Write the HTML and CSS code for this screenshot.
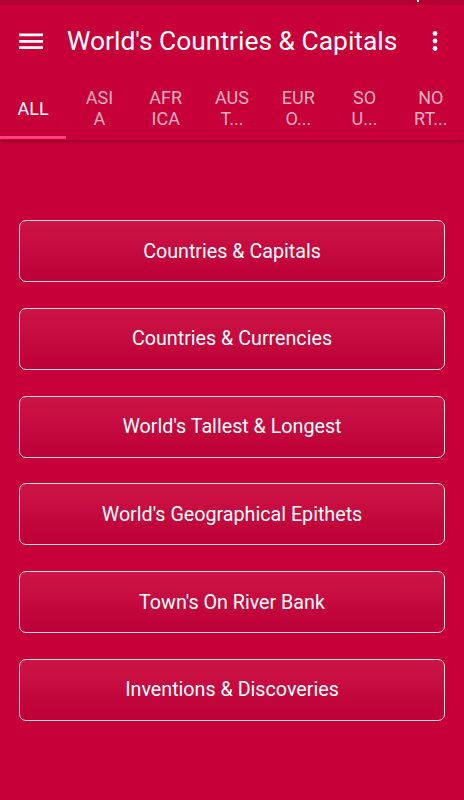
FILE: index.html
```html
<!DOCTYPE html>
<html>
<head>
<meta charset="utf-8">
<link rel="stylesheet" href="styles.css">
</head>
<body>
<div class="app">
  <div class="statusbar"><span class="status-dot"></span></div>
  <header class="toolbar">
    <svg class="menu" width="24" height="24" viewBox="0 0 24 24"><path d="M0 4.5h24v2.8H0zM0 10.9h24v2.8H0zM0 17.3h24v2.8H0z" fill="#fff"/></svg>
    <h1 class="title">World's Countries &amp; Capitals</h1>
    <svg class="more" width="24" height="24" viewBox="0 0 24 24"><circle cx="12" cy="4.5" r="2.4" fill="#fff"/><circle cx="12" cy="12" r="2.4" fill="#fff"/><circle cx="12" cy="19.5" r="2.4" fill="#fff"/></svg>
  </header>
  <nav class="tabs">
    <div class="tab active">ALL</div>
    <div class="tab">ASI<br>A</div>
    <div class="tab">AFR<br>ICA</div>
    <div class="tab">AUS<br>T...</div>
    <div class="tab">EUR<br>O...</div>
    <div class="tab">SO<br>U...</div>
    <div class="tab">NO<br>RT...</div>
  </nav>
  <main class="content">
    <div class="btn">Countries &amp; Capitals</div>
    <div class="btn">Countries &amp; Currencies</div>
    <div class="btn">World's Tallest &amp; Longest</div>
    <div class="btn">World's Geographical Epithets</div>
    <div class="btn">Town's On River Bank</div>
    <div class="btn">Inventions &amp; Discoveries</div>
  </main>
</div>
</body>
</html>
```
FILE: styles.css
```css
html, body { margin: 0; padding: 0; }
body { background: #c70039; font-family: Roboto, "Noto Sans", sans-serif; color: #fff; }
.app { width: 464px; height: 800px; overflow: hidden; background: #c70039; }
.statusbar { height: 5px; background: #b30034; position: relative; }
.status-dot { position: absolute; left: 417px; top: 0; width: 2px; height: 2px; background: #fff; }
.toolbar { height: 75px; display: flex; align-items: center; padding: 0 17px 0 19px; box-sizing: border-box; }
.menu { width: 24px; height: 24px; margin-top: -3px; }
.title { flex: 1; margin: -4px 0 0 24px; font-size: 26.4px; font-weight: 400; white-space: nowrap; }
.more { margin-top: -4px; }
.tabs { display: grid; grid-template-columns: repeat(7, 1fr); height: 60px; box-shadow: 0 2px 3px rgba(0,0,0,0.25); position: relative; }
.tab { display: flex; align-items: center; justify-content: center; text-align: center; font-size: 18px; line-height: 21px; color: rgba(255,255,255,0.7); position: relative; padding-bottom: 4px; }
.tab.active { color: #fff; }
.tab.active::after { content: ""; position: absolute; left: 0; right: 0; bottom: 1px; height: 3px; background: #ff4081; }
.content { display: flex; flex-direction: column; gap: 25.75px; padding: 80px 19px 0 19px; }
.btn { box-sizing: border-box; height: 62px; border: 1.5px solid #f3dede; border-radius: 7px; background: linear-gradient(#cc1446, #bd0037); display: flex; align-items: center; justify-content: center; font-size: 19.7px; color: #fff; }
```
